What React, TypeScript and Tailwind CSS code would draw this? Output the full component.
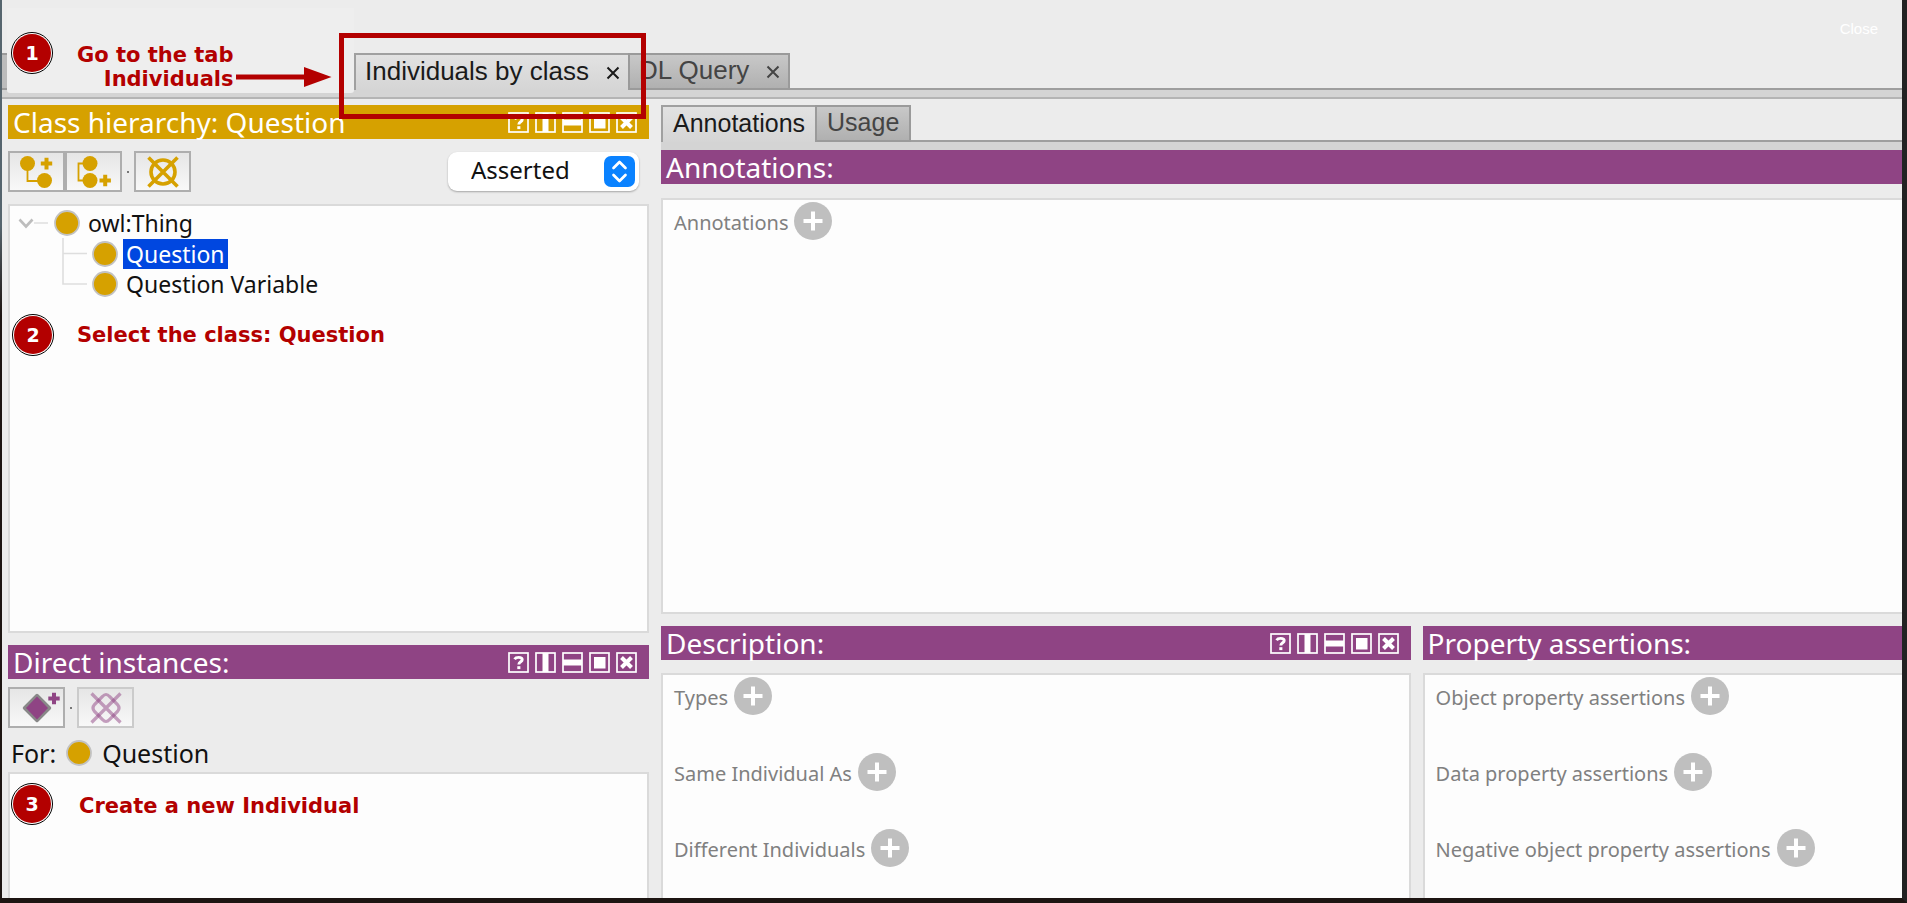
import type { ReactNode } from "react";

const gold = "#d6a100";
const purple = "#8f4484";

const windowButtons = [
  { name: "Help", icon: "help" },
  { name: "Split vertically", icon: "vertical" },
  { name: "Split horizontally", icon: "horizontal" },
  { name: "Float", icon: "float" },
  { name: "Close view", icon: "close" },
];

function WindowIcon({ icon }: { icon: string }) {
  return (
    <svg width="21" height="21" viewBox="0 0 21 21" fill="none" stroke="#fff" className="block">
      <rect x="1" y="1" width="19" height="19" strokeWidth="1.7" />
      {icon === "help" && (
        <g>
          <path d="M6.600 7.200C7.400 5.900 9 5.400 10.600 5.400c2.200 0 3.600 0.900 3.600 2.300C14.200 9.800 10.800 9.800 10.800 12.600" strokeWidth="2.900" />
          <rect x="9.300" y="14.200" width="3.100" height="2.900" fill="#fff" stroke="none" />
        </g>
      )}
      {icon === "vertical" && <path d="M10.500 1v19" strokeWidth="6" />}
      {icon === "horizontal" && <path d="M1 10.500h19" strokeWidth="6" />}
      {icon === "float" && <rect x="5" y="5" width="11.500" height="11.500" fill="#fff" stroke="none" />}
      {icon === "close" && <path d="M5.500 5.500l10 10M15.500 5.500l-10 10" strokeWidth="4" />}
    </svg>
  );
}

function ViewHeader({ title, color, controls = false }: { title: string; color: string; controls?: boolean }) {
  return (
    <header className={`flex h-[34px] shrink-0 items-center justify-between pl-[5px] pr-3 ${color}`}>
      <h2 className="whitespace-nowrap text-[28px] leading-8 text-white">{title}</h2>
      {controls && (
        <div className="flex gap-[6px]">
          {windowButtons.map((b) => (
            <button key={b.icon} type="button" aria-label={b.name}>
              <WindowIcon icon={b.icon} />
            </button>
          ))}
        </div>
      )}
    </header>
  );
}

function ToolButton({ label, disabled = false, children }: { label: string; disabled?: boolean; children: ReactNode }) {
  return (
    <button
      type="button"
      aria-label={label}
      disabled={disabled}
      className="flex h-[41px] w-[57px] items-center justify-center border-2 border-[#aeaeae] bg-linear-to-b from-[#e6e6e6] to-[#f8f8f8] disabled:border-[#cbcbcb]"
    >
      {children}
    </button>
  );
}

function ClassDot() {
  return (
    <svg width="26" height="26" viewBox="0 0 26 26" className="block shrink-0">
      <circle cx="13" cy="13" r="12" fill={gold} stroke="#c2c2c2" strokeWidth="1.800" />
    </svg>
  );
}

function AddRow({ label }: { label: string }) {
  return (
    <div className="flex h-[38px] items-center gap-[6px]">
      <span className="whitespace-nowrap pt-1 text-[20px] leading-7 text-[#808080]">{label}</span>
      <button type="button" aria-label={`Add ${label}`}>
        <svg width="38" height="38" viewBox="0 0 38 38" className="block">
          <circle cx="19" cy="19" r="19" fill="#bfbfbf" />
          <path d="M19 9.500v19M9.500 19h19" stroke="#fff" strokeWidth="4" />
        </svg>
      </button>
    </div>
  );
}

function Tab({ label, selected = false, closable = false }: { label: string; selected?: boolean; closable?: boolean }) {
  return (
    <div
      className={`flex h-[37px] items-center border-l-2 border-t-2 pb-[3px] font-['Liberation_Sans',Arial,sans-serif] leading-8 ${
        selected
          ? "border-[#a0a0a0] bg-linear-to-b from-[#e2e2e2] to-[#d5d5d5] text-[#1a1a1a]"
          : "border-b-2 border-r-2 border-[#9a9a9a] bg-linear-to-b from-[#c8c8c8] to-[#b0b0b0] text-[#444]"
      } ${closable ? "pl-[9px] pr-2 text-[26px]" : "px-[10px] text-[25px]"}`}
    >
      <button type="button" role="tab" aria-selected={selected} className="whitespace-nowrap">
        {label}
      </button>
      {closable && (
        <button type="button" aria-label={`Close ${label}`} className="ml-[17px]">
          <svg width="14" height="14" viewBox="0 0 14 14" className="mt-1 block">
            <path d="M1.500 1.500l11 11M12.500 1.500l-11 11" stroke="currentColor" strokeWidth="2" />
          </svg>
        </button>
      )}
    </div>
  );
}

function Step({ number, className }: { number: number; className: string }) {
  return (
    <div
      className={`absolute flex size-[42px] items-center justify-center rounded-full border border-black bg-white p-px ${className}`}
    >
      <span className="flex size-full items-center justify-center rounded-full bg-[#b30000] font-['DejaVu_Sans',sans-serif] text-[19px] font-bold leading-6 text-white">
        {number}
      </span>
    </div>
  );
}

const noteText =
  "whitespace-nowrap font-['DejaVu_Sans',sans-serif] text-[21px] font-bold leading-6 text-[#b30000]";

const panel = "border-2 border-[#dadada] bg-[#fdfdfd]";

function AddSubclassIcon() {
  return (
    <svg width="36" height="34" viewBox="0 0 36 34" fill={gold} className="block">
      <path d="M8.500 8v18H20" fill="none" stroke={gold} strokeWidth="1.800" />
      <circle cx="8.500" cy="8.500" r="7.500" />
      <circle cx="25.500" cy="25.500" r="7.500" />
      <path d="M25.500 2.800h4v3.800h3.700v4h-3.700v3.800h-4v-3.800h-3.700v-4h3.700z" />
    </svg>
  );
}

function AddSiblingIcon() {
  return (
    <svg width="34" height="34" viewBox="0 0 34 34" fill={gold} className="block">
      <path d="M8 8.500H1.500v17H8" fill="none" stroke={gold} strokeWidth="1.800" />
      <circle cx="13" cy="8.500" r="7.500" />
      <circle cx="13" cy="25.500" r="7.500" />
      <path d="M26.200 19.700h4v3.800h3.700v4h-3.700v3.800h-4v-3.800h-3.700v-4h3.700z" />
    </svg>
  );
}

function DeleteClassIcon() {
  return (
    <svg width="32" height="32" viewBox="0 0 32 32" fill="none" stroke={gold} className="block">
      <circle cx="16" cy="16" r="12" strokeWidth="3.600" />
      <path d="M1.500 1.500l29 29M30.500 1.500l-29 29" strokeWidth="3.600" />
    </svg>
  );
}

function AddIndividualIcon() {
  return (
    <svg width="48" height="36" viewBox="-8 0 48 36" className="block">
      <path
        d="M16 5.500L28.500 18 16 30.500 3.500 18z"
        fill={purple}
        stroke="#888"
        strokeWidth="3.400"
        strokeLinejoin="round"
      />
      <path d="M16 6.500L27 18 16 29.500 5 18z" fill={purple} />
      <path d="M31 2.700h4v3.800h3.700v4H35v3.800h-4v-3.800h-3.700v-4H31z" fill={purple} />
    </svg>
  );
}

function DeleteIndividualIcon() {
  return (
    <svg width="32" height="32" viewBox="0 0 32 32" fill="none" stroke={purple} className="block">
      <path
        d="M12.500 4.500q3.500-4 7 0l8 8q3 3.500 0 7l-8 8q-3.500 4-7 0l-8-8q-3-3.500 0-7z"
        strokeWidth="3.200"
        strokeOpacity="0.500"
      />
      <path d="M1.500 1.500l29 29M30.500 1.500l-29 29" strokeWidth="3.200" strokeOpacity="0.500" />
    </svg>
  );
}

function ClassTree() {
  return (
    <div className="relative flex flex-col pt-[2px] text-[23px] leading-[30px] text-[#111]" role="tree">
      <svg width="90" height="90" viewBox="0 0 90 90" fill="none" className="absolute left-0 top-0">
        <path d="M24 17h14M53 32v46h24M53 47.500h24" stroke="#dedede" strokeWidth="1.600" />
        <path d="M9.500 13.500l6.500 7 6.500-7" stroke="#bdbdbd" strokeWidth="2.600" />
      </svg>
      <div role="treeitem" className="flex h-[30px] items-center gap-[6px] pl-11">
        <ClassDot />
        <span className="px-[2px]">owl:Thing</span>
      </div>
      <div role="treeitem" aria-selected="true" className="flex h-[31px] items-center gap-[5px] pl-[82px]">
        <ClassDot />
        <span className="bg-[#0047e0] px-[3px] text-white">Question</span>
      </div>
      <div role="treeitem" className="flex h-[30px] items-center gap-[5px] pl-[82px]">
        <ClassDot />
        <span className="px-[3px]">Question Variable</span>
      </div>
    </div>
  );
}

export default function App() {
  return (
    <div className="flex min-h-screen flex-col bg-linear-to-b from-[#56656e] from-25% to-[#1d1512] to-35% font-['Noto_Sans','Open_Sans',sans-serif]">
      <div className="relative ml-[2px] flex grow flex-col overflow-hidden border-b-[5px] border-r-[5px] border-b-[#1d1512] border-r-[#222222] bg-[#ececec]">
        <button
          type="button"
          className="absolute right-6 top-[18px] font-['Liberation_Sans',Arial,sans-serif] text-[15px] leading-[22px] text-white"
        >
          Close
        </button>

        <nav className="flex h-[90px] items-end" role="tablist">
          <div className="h-[37px] w-[5px] border-y-2 border-[#9a9a9a] bg-[#bcbcbc]" />
          <div className="h-[82px] w-[347px] bg-[#eeeeee]" />
          <Tab label="Individuals by class" selected closable />
          <Tab label="DL Query" closable />
          <div className="grow border-b-2 border-[#9e9e9e]" />
        </nav>
        <div className="h-[9px] shrink-0 border-b-2 border-[#b4b4b4] bg-[#d4d4d4] pl-[5px]">
          <div className="h-[3px] w-[347px] rounded-b bg-[#eeeeee]" />
        </div>

        <main className="grid grow grid-cols-[641fr_1241fr] gap-x-3 pl-[6px] pt-[6px]">
          <div className="flex min-w-0 flex-col">
            <section className="flex flex-[528_1_0] flex-col">
              <ViewHeader title="Class hierarchy: Question" color="bg-[#d6a100]" controls />
              <div className="flex items-center py-3 pr-[10px]">
                <ToolButton label="Add subclass">
                  <AddSubclassIcon />
                </ToolButton>
                <ToolButton label="Add sibling class">
                  <AddSiblingIcon />
                </ToolButton>
                <span className="mx-[5px] size-[2px] bg-[#777]" />
                <ToolButton label="Delete class">
                  <DeleteClassIcon />
                </ToolButton>
                <div className="relative ml-auto">
                  <select
                    aria-label="Hierarchy mode"
                    className="block h-[39px] w-[191px] appearance-none rounded-[9px] bg-white pb-1 pl-[23px] text-[24px] leading-[35px] text-[#111] shadow-[0_1px_2px_rgba(0,0,0,0.3)]"
                  >
                    <option>Asserted</option>
                    <option>Inferred</option>
                  </select>
                  <svg
                    width="31"
                    height="31"
                    viewBox="0 0 31 31"
                    fill="none"
                    className="pointer-events-none absolute right-1 top-1"
                  >
                    <rect width="31" height="31" rx="7" fill="#0a82ff" />
                    <path
                      d="M9.500 12l6-6 6 6M9.500 19l6 6 6-6"
                      stroke="#fff"
                      strokeWidth="2.700"
                      strokeLinecap="round"
                      strokeLinejoin="round"
                    />
                  </svg>
                </div>
              </div>
              <div className={`grow ${panel}`}>
                <ClassTree />
              </div>
            </section>

            <section className="mt-3 flex flex-[253_1_0] flex-col">
              <ViewHeader title="Direct instances:" color="bg-[#8f4484]" controls />
              <div className="flex items-center pt-2">
                <ToolButton label="Add individual">
                  <AddIndividualIcon />
                </ToolButton>
                <span className="mx-[5px] size-[2px] bg-[#777]" />
                <ToolButton label="Delete individual" disabled>
                  <DeleteIndividualIcon />
                </ToolButton>
              </div>
              <div className="flex h-[44px] items-center gap-[10px] pl-[3px] pt-[6px] text-[25px] leading-8 text-[#111]">
                <span>For:</span>
                <ClassDot />
                <span>Question</span>
              </div>
              <div className={`grow border-b-0 ${panel}`} />
            </section>
          </div>

          <div className="flex min-w-0 flex-col">
            <section className="flex flex-[509_1_0] flex-col">
              <div className="flex" role="tablist">
                <Tab label="Annotations" selected />
                <Tab label="Usage" />
                <div className="grow border-b-2 border-[#9e9e9e]" />
              </div>
              <div className="h-2 shrink-0 bg-[#d4d4d4]" />
              <ViewHeader title="Annotations:" color="bg-[#8f4484]" />
              <div className={`mt-[14px] grow border-r-0 pl-[11px] pt-[2px] ${panel}`}>
                <AddRow label="Annotations" />
              </div>
            </section>

            <div className="mt-3 grid flex-[272_1_0] grid-cols-[749fr_479fr] gap-x-3">
              <section className="flex min-w-0 flex-col">
                <ViewHeader title="Description:" color="bg-[#8f4484]" controls />
                <div className={`mt-[13px] flex grow flex-col gap-[38px] border-b-0 pl-[11px] pt-[2px] ${panel}`}>
                  <AddRow label="Types" />
                  <AddRow label="Same Individual As" />
                  <AddRow label="Different Individuals" />
                </div>
              </section>
              <section className="flex min-w-0 flex-col">
                <ViewHeader title="Property assertions:" color="bg-[#8f4484]" />
                <div className={`mt-[13px] flex grow flex-col gap-[38px] border-b-0 border-r-0 pl-[11px] pt-[2px] ${panel}`}>
                  <AddRow label="Object property assertions" />
                  <AddRow label="Data property assertions" />
                  <AddRow label="Negative object property assertions" />
                </div>
              </section>
            </div>
          </div>
        </main>

        <div className="pointer-events-none absolute left-[337px] top-[33px] h-[86px] w-[307px] border-[5px] border-[#b30000]" />
        <Step number={1} className="left-[9px] top-8" />
        <p className={`absolute left-[75px] top-[43px] text-right ${noteText}`}>
          Go to the tab
          <br />
          Individuals
        </p>
        <svg width="96" height="20" viewBox="0 0 96 20" fill="#b30000" className="absolute left-[234px] top-[67px]">
          <path d="M0 7.500h68V0l27.500 10L68 20v-7.500H0z" />
        </svg>
        <Step number={2} className="left-[10px] top-[314px]" />
        <p className={`absolute left-[75px] top-[323px] ${noteText}`}>Select the class: Question</p>
        <Step number={3} className="left-[9px] top-[783px]" />
        <p className={`absolute left-[77px] top-[794px] ${noteText}`}>Create a new Individual</p>
      </div>
    </div>
  );
}
